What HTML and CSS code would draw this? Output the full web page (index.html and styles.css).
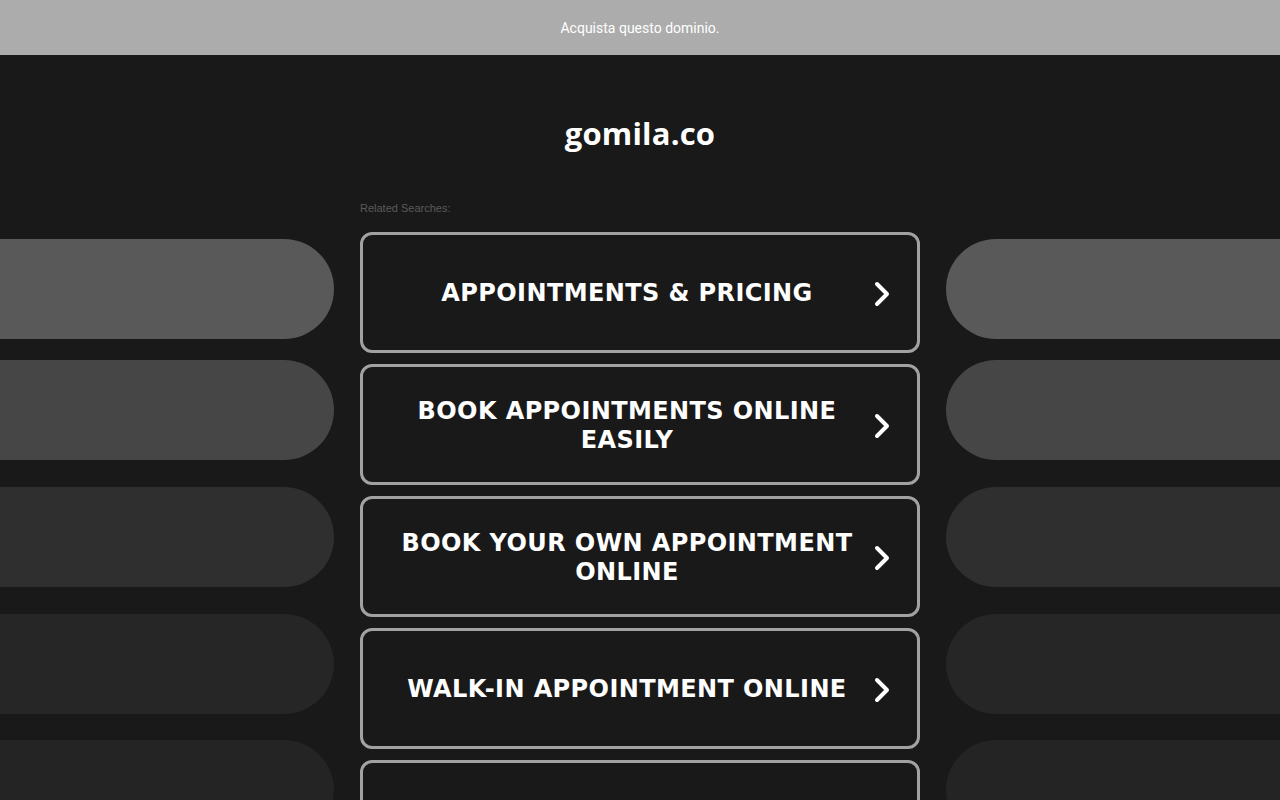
FILE: index.html
```html
<!DOCTYPE html>
<html lang="it">
<head>
<meta charset="utf-8">
<title>gomila.co</title>
<link rel="stylesheet" href="styles.css">
</head>
<body>
<div class="topbar">Acquista questo dominio.</div>
<h1 class="title">gomila.co</h1>
<div class="layout">
  <div class="side side-left">
    <div class="pill p1"></div>
    <div class="pill p2"></div>
    <div class="pill p3"></div>
    <div class="pill p4"></div>
    <div class="pill p5"></div>
  </div>
  <div class="center">
    <div class="label">Related Searches:</div>
    <div class="cards">
      <a class="card" href="#"><span class="ctext">APPOINTMENTS &amp; PRICING</span><svg class="chev" viewBox="0 0 16 26"><path d="M3 3 L13 13 L3 23" fill="none" stroke="#fff" stroke-width="4" stroke-linecap="round" stroke-linejoin="round"/></svg></a>
      <a class="card" href="#"><span class="ctext">BOOK APPOINTMENTS ONLINE EASILY</span><svg class="chev" viewBox="0 0 16 26"><path d="M3 3 L13 13 L3 23" fill="none" stroke="#fff" stroke-width="4" stroke-linecap="round" stroke-linejoin="round"/></svg></a>
      <a class="card" href="#"><span class="ctext">BOOK YOUR OWN APPOINTMENT ONLINE</span><svg class="chev" viewBox="0 0 16 26"><path d="M3 3 L13 13 L3 23" fill="none" stroke="#fff" stroke-width="4" stroke-linecap="round" stroke-linejoin="round"/></svg></a>
      <a class="card" href="#"><span class="ctext">WALK-IN APPOINTMENT ONLINE</span><svg class="chev" viewBox="0 0 16 26"><path d="M3 3 L13 13 L3 23" fill="none" stroke="#fff" stroke-width="4" stroke-linecap="round" stroke-linejoin="round"/></svg></a>
      <a class="card" href="#"><span class="ctext">SCHEDULE APPOINTMENTS</span><svg class="chev" viewBox="0 0 16 26"><path d="M3 3 L13 13 L3 23" fill="none" stroke="#fff" stroke-width="4" stroke-linecap="round" stroke-linejoin="round"/></svg></a>
    </div>
  </div>
  <div class="side side-right">
    <div class="pill p1"></div>
    <div class="pill p2"></div>
    <div class="pill p3"></div>
    <div class="pill p4"></div>
    <div class="pill p5"></div>
  </div>
</div>
</body>
</html>
```

FILE: styles.css
```css
html, body {
  margin: 0;
  padding: 0;
  background: #191919;
  height: 800px;
  overflow: hidden;
}
body {
  font-family: "Liberation Sans", Arial, sans-serif;
}
.topbar {
  height: 55px;
  background: #acacac;
  color: #ffffff;
  font-family: Roboto, "Liberation Sans", sans-serif;
  font-size: 14px;
  display: flex;
  align-items: center;
  justify-content: center;
}
.title {
  margin: 0;
  padding-top: 59px;
  height: 39px;
  line-height: 39px;
  text-align: center;
  color: #ffffff;
  font-family: "Open Sans", sans-serif;
  font-weight: 700;
  font-size: 31px;
  letter-spacing: 0.2px;
}
.layout {
  display: grid;
  grid-template-columns: 334px 560px 334px;
  column-gap: 26px;
  margin-top: 49px;
}
.side {
  display: flex;
  flex-direction: column;
  gap: 21px;
  padding-top: 37px;
}
.pill {
  height: 100px;
  border-radius: 50px;
}
.side-left .pill { border-top-left-radius: 0; border-bottom-left-radius: 0; }
.side-right .pill { border-top-right-radius: 0; border-bottom-right-radius: 0; }
.p1 { background: #595959; }
.p2 { background: #464646; margin-bottom: 6px; }
.p3 { background: #2f2f2f; margin-bottom: 6px; }
.p4 { background: #262626; margin-bottom: 5px; }
.p5 { background: #242424; }
.label {
  font-size: 11px;
  color: #5a5a5a;
  height: 30px;
  line-height: 13px;
}
.cards {
  display: flex;
  flex-direction: column;
  gap: 11px;
}
.card {
  box-sizing: border-box;
  height: 121px;
  border: 3px solid #a2a2a2;
  border-radius: 12px;
  display: flex;
  align-items: center;
  padding: 2px 27px 0 17px;
  text-decoration: none;
  color: #ffffff;
}
.ctext {
  flex: 1;
  text-align: center;
  font-family: "DejaVu Sans", Verdana, sans-serif;
  font-weight: 700;
  font-size: 24px;
  line-height: 29px;
  letter-spacing: 0.4px;
  padding: 0 14px;
}
.chev {
  width: 16px;
  height: 26px;
  flex: none;
}
```
